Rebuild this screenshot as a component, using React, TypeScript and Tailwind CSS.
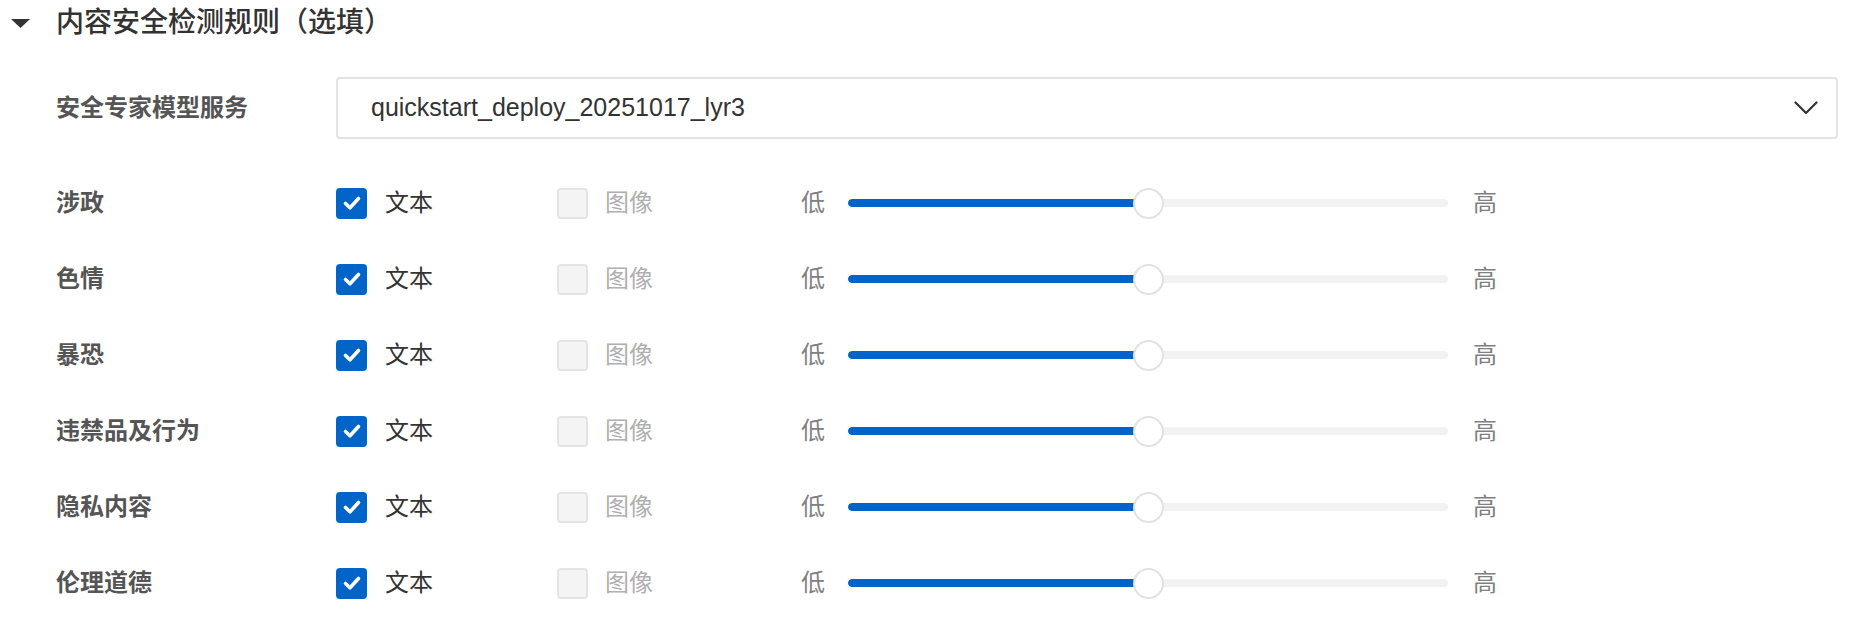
import React from "react";

const rows = ["涉政", "色情", "暴恐", "违禁品及行为", "隐私内容", "伦理道德"];

function Check() {
  return (
    <div className="w-[31px] h-[31px] rounded-[4px] bg-[#0064c8] flex items-center justify-center shrink-0">
      <svg width="22" height="22" viewBox="0 0 22 22" fill="none">
        <path d="M4.5 11.5 L9 15.8 L17.5 6.5" stroke="white" strokeWidth="3.6" strokeLinecap="round" strokeLinejoin="round" />
      </svg>
    </div>
  );
}

function Unchecked() {
  return <div className="w-[31px] h-[31px] rounded-[4px] bg-[#f4f4f4] border-2 border-[#e4e4e4] shrink-0" />;
}

function Slider() {
  return (
    <div className="relative w-[600px] h-[31px] flex items-center">
      <div className="w-full h-[8px] rounded-full bg-[#f2f2f2] overflow-hidden flex">
        <div className="w-[300px] h-full bg-[#0064c8] rounded-l-full" />
      </div>
      <div className="absolute left-[285px] top-0 w-[31px] h-[31px] rounded-full bg-white border-2 border-[#e2e2e2]" />
    </div>
  );
}

export default function App() {
  return (
    <div
      className="w-[1874px] h-[640px] bg-white text-[#333]"
      style={{ fontFamily: '"Liberation Sans", "Noto Sans CJK SC", sans-serif' }}
    >
      <div className="h-[46px] flex items-center pl-[11px]">
        <svg width="19" height="9" viewBox="0 0 19 9" className="shrink-0">
          <path d="M0 0 L19 0 L9.5 9 Z" fill="#333" />
        </svg>
        <span className="ml-[26px] text-[28px] leading-none font-medium text-[#333]">内容安全检测规则（选填）</span>
      </div>

      <div className="pl-[56px]">
        <div className="mt-[31px] flex items-center h-[62px]">
          <div className="w-[280px] text-[24px] font-semibold text-[#555]">安全专家模型服务</div>
          <div className="w-[1502px] h-[62px] border-2 border-[#e3e3e3] rounded-[4px] flex items-center pl-[33px] pr-[18px] justify-between">
            <span className="text-[25px] text-[#333]">quickstart_deploy_20251017_lyr3</span>
            <svg width="24" height="14" viewBox="0 0 24 14" fill="none">
              <path d="M1.5 1.5 L12 12 L22.5 1.5" stroke="#333" strokeWidth="2.2" strokeLinecap="round" strokeLinejoin="round" />
            </svg>
          </div>
        </div>

        <div className="mt-[26px] flex flex-col">
          {rows.map((r) => (
            <div key={r} className="h-[76px] flex items-center">
              <div className="w-[280px] text-[24px] font-semibold text-[#555]">{r}</div>
              <div className="w-[221px] flex items-center gap-[18px]">
                <Check />
                <span className="text-[24px] text-[#333]">文本</span>
              </div>
              <div className="w-[244px] flex items-center gap-[17px]">
                <Unchecked />
                <span className="text-[24px] text-[#b0b0b0]">图像</span>
              </div>
              <span className="text-[24px] text-[#808080] w-[47px]">低</span>
              <Slider />
              <span className="text-[24px] text-[#808080] ml-[25px]">高</span>
            </div>
          ))}
        </div>
      </div>
    </div>
  );
}
